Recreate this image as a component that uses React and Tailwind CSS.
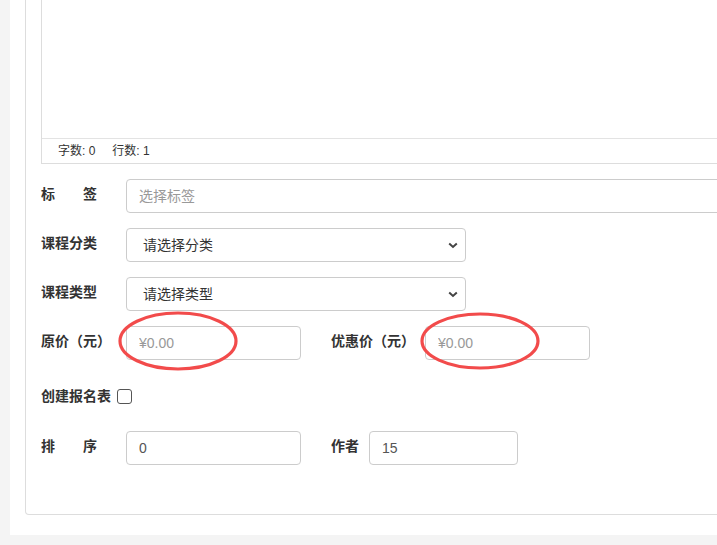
import React from 'react';

const font = { fontFamily: '"Helvetica Neue", "Liberation Sans", "Noto Sans CJK SC", sans-serif' };

function Label({ children, className = '' }) {
  return (
    <div className={`shrink-0 pt-[5px] text-[14px] leading-[20px] font-bold text-[#333] whitespace-pre ${className}`}>
      {children}
    </div>
  );
}

function TextInput({ placeholder, value, className = '' }) {
  return (
    <input
      readOnly
      placeholder={placeholder}
      defaultValue={value}
      className={`h-[34px] shrink-0 rounded border border-[#ccc] bg-white px-3 text-[14px] text-[#555] placeholder:text-[#999] outline-none ${className}`}
    />
  );
}

function Select({ text }) {
  return (
    <div className="relative h-[34px] w-[340px] shrink-0 rounded border border-[#ccc] bg-white">
      <div className="pl-4 text-[14px] leading-[32px] text-[#333]">{text}</div>
      <svg className="absolute right-[7px] top-[13px]" width="10" height="7" viewBox="0 0 10 7">
        <path d="M1.2 1.5 L5 5 L8.8 1.5" fill="none" stroke="#444" strokeWidth="2" />
      </svg>
    </div>
  );
}

export default function App() {
  return (
    <div className="relative h-[545px] w-[717px] overflow-hidden bg-[#f4f4f4] pl-[10px] pb-[10px]" style={font}>
      <div className="h-full w-[760px] bg-white pl-[15px] pb-[20px]">
        <div className="h-full w-[760px] rounded-b border border-t-0 border-[#ddd] pl-[15px]">
          {/* editor */}
          <div className="w-[760px] border-l border-b border-[#ddd]">
            <div className="h-[138px]" />
            <div className="flex h-[25px] items-center gap-[17px] border-t border-[#e3e3e3] pl-4 text-[12px] text-[#333]">
              <span>字数: 0</span>
              <span>行数: 1</span>
            </div>
          </div>

          <div className="mt-[15px] flex items-start">
            <Label className="w-[85px]">{'标　　签'}</Label>
            <TextInput placeholder="选择标签" className="w-[700px]" />
          </div>

          <div className="mt-[15px] flex items-start">
            <Label className="w-[85px]">课程分类</Label>
            <Select text="请选择分类" />
          </div>

          <div className="mt-[15px] flex items-start">
            <Label className="w-[85px]">课程类型</Label>
            <Select text="请选择类型" />
          </div>

          <div className="mt-[15px] flex items-start">
            <Label className="w-[85px]">原价（元）</Label>
            <TextInput placeholder="¥0.00" className="w-[175px]" />
            <Label className="ml-[30px] mr-[10px]">优惠价（元）</Label>
            <TextInput placeholder="¥0.00" className="w-[165px]" />
          </div>

          <div className="mt-[28px] flex h-[16px] items-center">
            <span className="text-[14px] font-bold text-[#333]">创建报名表</span>
            <span className="ml-[6px] h-[15px] w-[15px] rounded-[3px] border border-[#555] bg-white" />
          </div>

          <div className="mt-[27px] flex items-start">
            <Label className="w-[85px]">{'排　　序'}</Label>
            <TextInput value="0" className="w-[175px]" />
            <Label className="ml-[30px] mr-[10px]">作者</Label>
            <TextInput value="15" className="w-[149px]" />
          </div>
        </div>
      </div>

      {/* red annotation marks */}
      <svg className="pointer-events-none absolute left-0 top-0" width="717" height="545">
        <ellipse cx="178" cy="341" rx="58" ry="28" fill="none" stroke="#f24b4b" strokeWidth="3.2" />
        <ellipse cx="480" cy="341" rx="58" ry="27" fill="none" stroke="#f24b4b" strokeWidth="3.2" />
      </svg>
    </div>
  );
}
